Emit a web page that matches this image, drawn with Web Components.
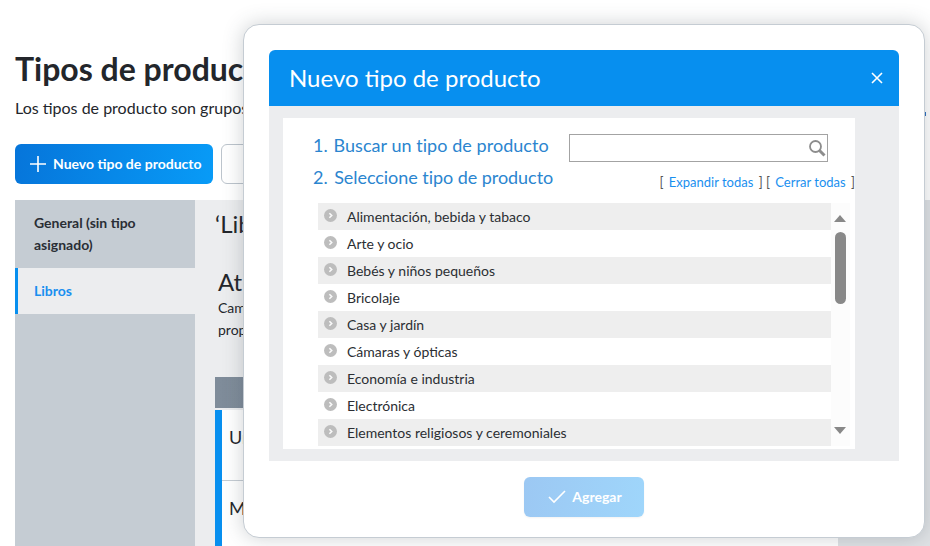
<!DOCTYPE html>
<html lang="es"><head><meta charset="utf-8"><title>Tipos de producto</title>
<style>html,body{margin:0;height:546px;overflow:hidden;background:#fff;font-family:Lato,"Liberation Sans",sans-serif}</style>
</head><body>
<product-page>
  <product-modal></product-modal>
</product-page>
<script>
function el(name, html){
  customElements.define(name, class extends HTMLElement{
    constructor(){super();this.attachShadow({mode:'open'}).innerHTML=html;}
  });
}
el('side-item',`<style>
:host{display:block;background:#c5ccd3;color:#2a2e35;font:700 14px/22px Lato,sans-serif;padding:12px 19px 12px 19px;box-sizing:border-box}
:host([active]){background:#ecedef;color:#1a8fef;border-left:3px solid #078fef;padding:12px 19px 12px 16px;height:46px}
</style><slot></slot>`);
el('side-bar',`<style>:host{display:block;width:180px;background:#c5ccd3;flex:none}</style><slot></slot>`);
el('attr-row',`<style>
:host{display:block;height:71px;border-bottom:1px solid #c5ccd3;padding:16px 0 0 7px;box-sizing:border-box;font:400 18px/22px Lato,sans-serif;color:#23262b;white-space:nowrap}
</style><slot></slot>`);
el('product-page',`<style>
:host{display:block;position:relative;width:930px;height:546px;overflow:hidden;color:#23262b}
.wrap{padding:49px 0 0 15px}
h1{margin:0;font:700 32px/40px Lato,sans-serif;color:#23262b;white-space:nowrap}
p{margin:8px 0 0;font:400 16px/22px Lato,sans-serif;white-space:nowrap}
.actions{display:flex;gap:8px;margin-top:25px}
.primary{display:flex;align-items:center;gap:6px;width:198px;height:40px;box-sizing:border-box;padding-left:14px;border-radius:6px;background:linear-gradient(100deg,#0675da,#089bf7);color:#fff;font:700 14px/20px Lato,sans-serif;white-space:nowrap}
.secondary{width:100px;height:40px;box-sizing:border-box;border:1px solid #bcc4cc;border-radius:6px;background:#fff}
.main{display:flex;margin-top:16px;height:346px}
.content{width:643px;background:#ecedef;flex:none;padding:0 0 0 20px;box-sizing:border-box;white-space:nowrap;overflow:hidden}
.rest{flex:1;background:#dfe2e5}
.quote{font:400 24px/30px Lato,sans-serif;margin-top:9px}
h2{font:400 24px/30px Lato,sans-serif;margin:28px 0 0 3px}
.desc{font:400 14px/22px Lato,sans-serif;margin:0 0 0 3px}
.thead{height:31px;background:linear-gradient(90deg,#7f8c9a,#75828f);margin-top:36px}
.rows{margin-top:2px;border-left:7px solid #078fef;background:#fff}
.peek{position:absolute;left:925px;top:112px;width:1px;height:4px;background:#2a6fc0}
</style>
<div class="wrap">
<h1>Tipos de producto</h1>
<p>Los tipos de producto son grupos de productos con atributos comunes</p>
<div class="actions">
  <div class="primary"><svg width="18" height="18" viewBox="0 0 18 18"><path d="M9 1v16M1 9h16" stroke="#fff" stroke-width="1.6" fill="none"/></svg><span>Nuevo tipo de producto</span></div>
  <div class="secondary"></div>
</div>
<div class="main">
  <side-bar><side-item>General (sin tipo asignado)</side-item><side-item active>Libros</side-item></side-bar>
  <div class="content">
    <div class="quote">‘Libros’</div>
    <h2>Atributos</h2>
    <div class="desc">Campos personalizados de los productos<br>propios de este tipo</div>
    <div class="thead"></div>
    <div class="rows"><attr-row>Unidad</attr-row><attr-row>Marca</attr-row></div>
  </div>
  <div class="rest"></div>
</div>
</div>
<div class="peek"></div>
<slot></slot>`);
const cats=['Alimentación, bebida y tabaco','Arte y ocio','Bebés y niños pequeños','Bricolaje','Casa y jardín','Cámaras y ópticas','Economía e industria','Electrónica','Elementos religiosos y ceremoniales'];
el('tree-row',`<style>
:host{display:flex;height:27px;box-sizing:border-box;font:400 14px/27px Lato,sans-serif;color:#2b2e33;white-space:nowrap}
:host(:nth-child(odd)){background:#eeeeee}
svg{margin:6px 10px 0 6px;flex:none}
</style><svg width="13" height="13" viewBox="0 0 13 13"><circle cx="6.5" cy="6.5" r="6.5" fill="#bdbdbd"/><path d="M5.4 4.2 7.7 6.5 5.4 8.8" stroke="#fafafa" stroke-width="1.6" fill="none"/></svg><slot></slot>`);
el('tree-scroll',`<style>
:host{display:block;position:relative;width:19px;flex:none;background:#fcfcfc}
.up,.down{position:absolute;left:3px;width:0;height:0;border-left:6.5px solid transparent;border-right:6.5px solid transparent}
.up{top:12px;border-bottom:7px solid #888}
.down{bottom:12px;border-top:7px solid #888}
.thumb{position:absolute;left:4px;top:29px;width:11px;height:72px;border-radius:5.5px;background:#888}
</style><div class="up"></div><div class="thumb"></div><div class="down"></div>`);
el('product-modal',`<style>
:host{display:block;position:absolute;left:243px;top:24px;width:682px;height:514px;box-sizing:border-box;background:#fff;border:1px solid #c5ccd3;border-radius:16px;box-shadow:0 0 20px rgba(60,70,80,.25);padding:25px 25px 0 25px}
header{display:flex;align-items:center;justify-content:space-between;height:56px;background:#078fef;border-radius:6px 6px 0 0;padding:0 16px 0 20px;color:#fff;font:400 24px/30px Lato,sans-serif}
.body{background:#ecedef;padding:12px 44px 12px 14px;height:355px;box-sizing:border-box}
.inner{background:#fff;height:331px;padding:0 0 0 35px;box-sizing:border-box;display:flex;flex-direction:column;overflow:hidden}
.step{font:400 18px/24px Lato,sans-serif;color:#2b85cf;white-space:nowrap}
.n1{margin-right:1px}
.n2{margin-right:2px}
.s1{letter-spacing:.05px}
.s2{letter-spacing:-.05px}
.top{display:flex;height:28px;margin-left:-5px;align-items:flex-start;padding-top:15px}
.top .search{margin:1px 27px 0 auto}
.search{width:259px;height:28px;box-sizing:border-box;border:1px solid #a3a3a3;display:flex;justify-content:flex-end;align-items:center;padding-right:1px;background:#fff}
.second{display:flex;justify-content:space-between;margin:4px 0 0 -5px;height:24px}
.links{font:400 13px/18px Lato,sans-serif;color:#555;margin:8px 0 0 0;white-space:pre}
.links span{color:#1a8fef;margin:0 2px}
.tree{display:flex;margin:14px 0 0 0}
.list{width:513px}
footer{display:flex;justify-content:center;padding-top:16px}
.add{display:flex;align-items:center;justify-content:center;gap:6px;width:120px;height:40px;padding-left:2px;box-sizing:border-box;border-radius:6px;background:linear-gradient(100deg,#9cc8f3,#9fd6fb);color:#fff;font:700 14px/20px Lato,sans-serif;box-shadow:0 1px 2px rgba(0,0,0,.05)}
</style>
<header><span>Nuevo tipo de producto</span><svg width="12" height="12" viewBox="0 0 12 12"><path d="M1 1l10 10M11 1 1 11" stroke="#fff" stroke-width="1.6" fill="none"/></svg></header>
<div class="body"><div class="inner">
  <div class="top"><div class="step s1"><span class="n1">1.</span> Buscar un tipo de producto</div><div class="search"><svg width="18" height="18" viewBox="0 0 18 18"><circle cx="7.5" cy="7.5" r="5.5" fill="none" stroke="#8d8d8d" stroke-width="1.8"/><path d="M11.5 11.5l5 5" stroke="#8d8d8d" stroke-width="3"/></svg></div></div>
  <div class="second"><div class="step s2"><span class="n2">2.</span> Seleccione tipo de producto</div><div class="links">[ <span>Expandir todas</span> ] [ <span>Cerrar todas</span> ]</div></div>
  <div class="tree"><div class="list">${cats.map(c=>`<tree-row>${c}</tree-row>`).join('')}</div><tree-scroll></tree-scroll></div>
</div></div>
<footer><div class="add"><svg width="18" height="14" viewBox="0 0 18 14"><path d="M1 7l5 5L17 1" stroke="#fff" stroke-width="1.6" fill="none"/></svg><span>Agregar</span></div></footer>`);
</script>
</body></html>
